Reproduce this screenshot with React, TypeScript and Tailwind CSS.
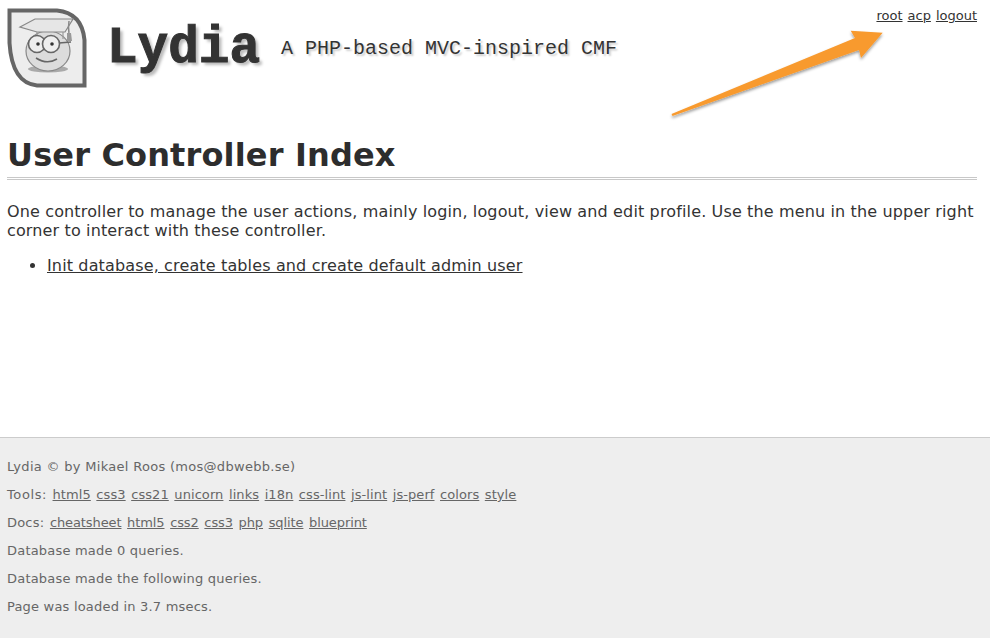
export default function App() {
  const tools = ["html5", "css3", "css21", "unicorn", "links", "i18n", "css-lint", "js-lint", "js-perf", "colors", "style"];
  const docs = ["cheatsheet", "html5", "css2", "css3", "php", "sqlite", "blueprint"];
  return (
    <div className="h-[638px] w-[990px] overflow-hidden bg-white font-['DejaVu_Sans','Verdana',sans-serif] text-[#333] flex flex-col">
      <main className="relative h-[437px] shrink-0 pl-[7px] pr-[13px]">
        <header className="relative flex h-[120px] items-start justify-between pt-[8px]">
          <div className="flex items-start">
            <svg width="80" height="80" viewBox="0 0 80 80" className="shrink-0">
              <path d="M2.5 2.5 H50 Q75 5 77.5 32 V77.5 H30 Q5 75 2.5 35 Z" fill="#ededed" stroke="#666" strokeWidth="4" />
              <ellipse cx="41" cy="61" rx="20" ry="3.5" fill="#aaa" />
              <ellipse cx="41" cy="43" rx="22" ry="20" fill="#dcdcdc" stroke="#888" strokeWidth="1.2" />
              <path d="M13 19 L28 11 H66 L58 24 L30 24 Z" fill="#e6e6e6" stroke="#888" strokeWidth="1.2" />
              <path d="M30 24 V31 M56 24 V31" fill="none" stroke="#999" strokeWidth="1.2" />
              <path d="M62 13 Q61 20 62 25" fill="none" stroke="#888" strokeWidth="1.5" />
              <path d="M60 25 L60 33 H65 L64 25 Z" fill="#999" />
              <circle cx="30" cy="36" r="8.5" fill="#eee" stroke="#666" strokeWidth="1.6" />
              <circle cx="44" cy="36" r="8.5" fill="#eee" stroke="#666" strokeWidth="1.6" />
              <path d="M52 35 L64 34" stroke="#666" strokeWidth="1.6" />
              <circle cx="31" cy="36" r="1.8" fill="#333" />
              <circle cx="45" cy="36" r="1.8" fill="#333" />
              <path d="M29 50 Q40 57 50 51" fill="none" stroke="#666" strokeWidth="1.5" />
            </svg>
            <div className="ml-[20px] pt-[17px] font-['Liberation_Mono',monospace] text-[51px] leading-[48px] font-bold [-webkit-text-stroke:1px_#333] [text-shadow:3px_3px_3px_#bbb]">Lydia</div>
            <div className="ml-[21px] pt-[29px] font-['Liberation_Mono',monospace] text-[20px] leading-[24px] text-[#333] [text-shadow:2px_2px_2px_#ccc]">A PHP-based MVC-inspired CMF</div>
          </div>
          <nav className="flex gap-[5px] text-[13px] leading-[16px]">
            <a className="underline">root</a>
            <a className="underline">acp</a>
            <a className="underline">logout</a>
          </nav>
          <svg width="230" height="100" viewBox="0 0 230 100" className="absolute left-[653px] top-[22px] overflow-visible">
            <defs>
              <filter id="s" x="-10%" y="-20%" width="120%" height="150%">
                <feDropShadow dx="0" dy="2" stdDeviation="1.5" floodColor="#000" floodOpacity="0.4" />
              </filter>
            </defs>
            <path d="M11.5 92 L195 16 L190.7 8.7 L222.7 10.7 L201 36 L199 28 L12.5 94 Z" fill="#f89a2e" filter="url(#s)" />
          </svg>
        </header>
        <h1 className="mt-[13px] text-[32px] leading-[44px] font-bold tracking-[0.15px] text-[#2d2d2d]">User Controller Index</h1>
        <div className="h-[3px] border-y border-[#c8c8c8]" />
        <p className="mt-[22px] text-[16px] leading-[19px] tracking-[0.14px]">One controller to manage the user actions, mainly login, logout, view and edit profile. Use the menu in the upper right corner to interact with these controller.</p>
        <ul className="mt-[16px] list-disc pl-[40px] text-[16px] leading-[19px] tracking-[0.14px]">
          <li><a className="underline">Init database, create tables and create default admin user</a></li>
        </ul>
      </main>
      <footer className="flex-1 border-t border-[#ccc] bg-[#eee] px-[7px] pt-[15px] text-[13px] leading-[28px] tracking-[0.2px] text-[#666]">
        <p className="tracking-[0.3px]">Lydia © by Mikael Roos (mos@dbwebb.se)</p>
        <p className="tracking-[0.08px] [word-spacing:1.3px]"><span className="tracking-[0.6px]">Tools:</span> {tools.map((t) => <span key={t}><a className="underline">{t}</a> </span>)}</p>
        <p className="tracking-[-0.1px] [word-spacing:1.6px]"><span className="tracking-[0.2px]">Docs:</span> {docs.map((t, i) => <span key={t + i}><a className="underline">{t}</a> </span>)}</p>
        <p>Database made 0 queries.</p>
        <p>Database made the following queries.</p>
        <p>Page was loaded in 3.7 msecs.</p>
      </footer>
    </div>
  );
}
